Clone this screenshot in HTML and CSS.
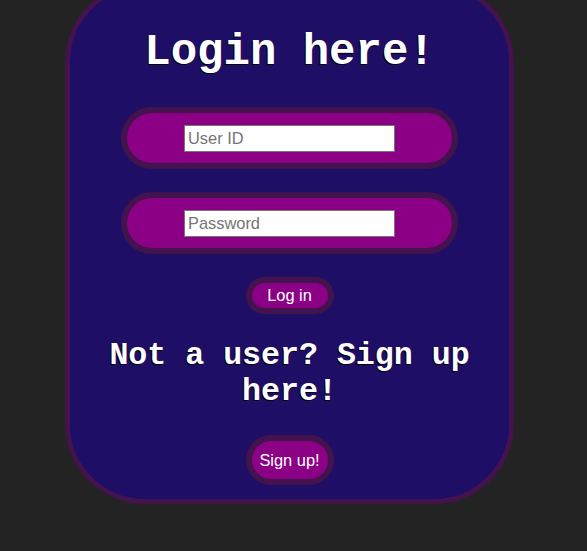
FILE: index.html
```html
<!DOCTYPE html>
<html lang="en">
<head>
<meta charset="utf-8">
<title>Login</title>
<link rel="stylesheet" href="styles.css">
</head>
<body>
<div class="page">
  <form class="card">
    <h1 class="title">Login here!</h1>
    <div class="pill">
      <input class="field" type="text" placeholder="User ID">
    </div>
    <div class="pill pill-second">
      <input class="field" type="password" placeholder="Password">
    </div>
    <button class="btn btn-login" type="button">Log in</button>
    <h2 class="subtitle">Not a user? Sign up here!</h2>
    <button class="btn btn-signup" type="button">Sign up!</button>
  </form>
</div>
</body>
</html>
```
FILE: styles.css
```css
html, body {
  margin: 0;
  padding: 0;
  background: #232323;
}

body {
  font-family: "Liberation Sans", Arial, sans-serif;
  height: 551px;
  overflow: hidden;
}

.page {
  padding-left: 65px;
}

.card {
  box-sizing: border-box;
  width: 449px;
  height: 522px;
  margin-top: -18px;
  background: #1f0e66;
  border: 5px solid #42134d;
  border-radius: 80px;
  display: flex;
  flex-direction: column;
  align-items: center;
  padding: 40px 0 13px;
}

.title,
.subtitle {
  margin: 0;
  font-family: "Courier New", "Nimbus Mono PS", "FreeMono", "Liberation Mono", monospace;
  font-weight: bold;
  color: #ffffff;
  text-align: center;
  line-height: normal;
  text-shadow: -1px 1px 0 #000000;
}

.title {
  font-size: 44px;
}

.subtitle {
  font-size: 31.6px;
  line-height: 36px;
  margin-top: 24px;
}

.pill {
  box-sizing: border-box;
  width: 337px;
  height: 62px;
  margin-top: 30px;
  background: #8b0085;
  border: 6px solid #42134d;
  border-radius: 31px;
  display: flex;
  align-items: center;
  justify-content: center;
}

.pill-second {
  margin-top: 23px;
}

.field {
  box-sizing: border-box;
  width: 211px;
  height: 27px;
  margin: 0;
  padding: 1px 3px;
  border: 1px solid #767676;
  background: #ffffff;
  font-family: "Liberation Sans", Arial, sans-serif;
  font-size: 16.4px;
  color: #000000;
}

.field::placeholder {
  color: #757575;
}

.btn {
  box-sizing: border-box;
  width: 88px;
  margin: 0;
  padding: 0;
  background: #8b0085;
  border: 6px solid #42134d;
  color: #ffffff;
  font-family: "Liberation Sans", Arial, sans-serif;
  font-size: 16.4px;
  line-height: 1;
}

.btn-login {
  height: 37px;
  margin-top: 23px;
  border-radius: 19px;
}

.btn-signup {
  height: 50px;
  margin-top: 25px;
  border-radius: 25px;
}
```
